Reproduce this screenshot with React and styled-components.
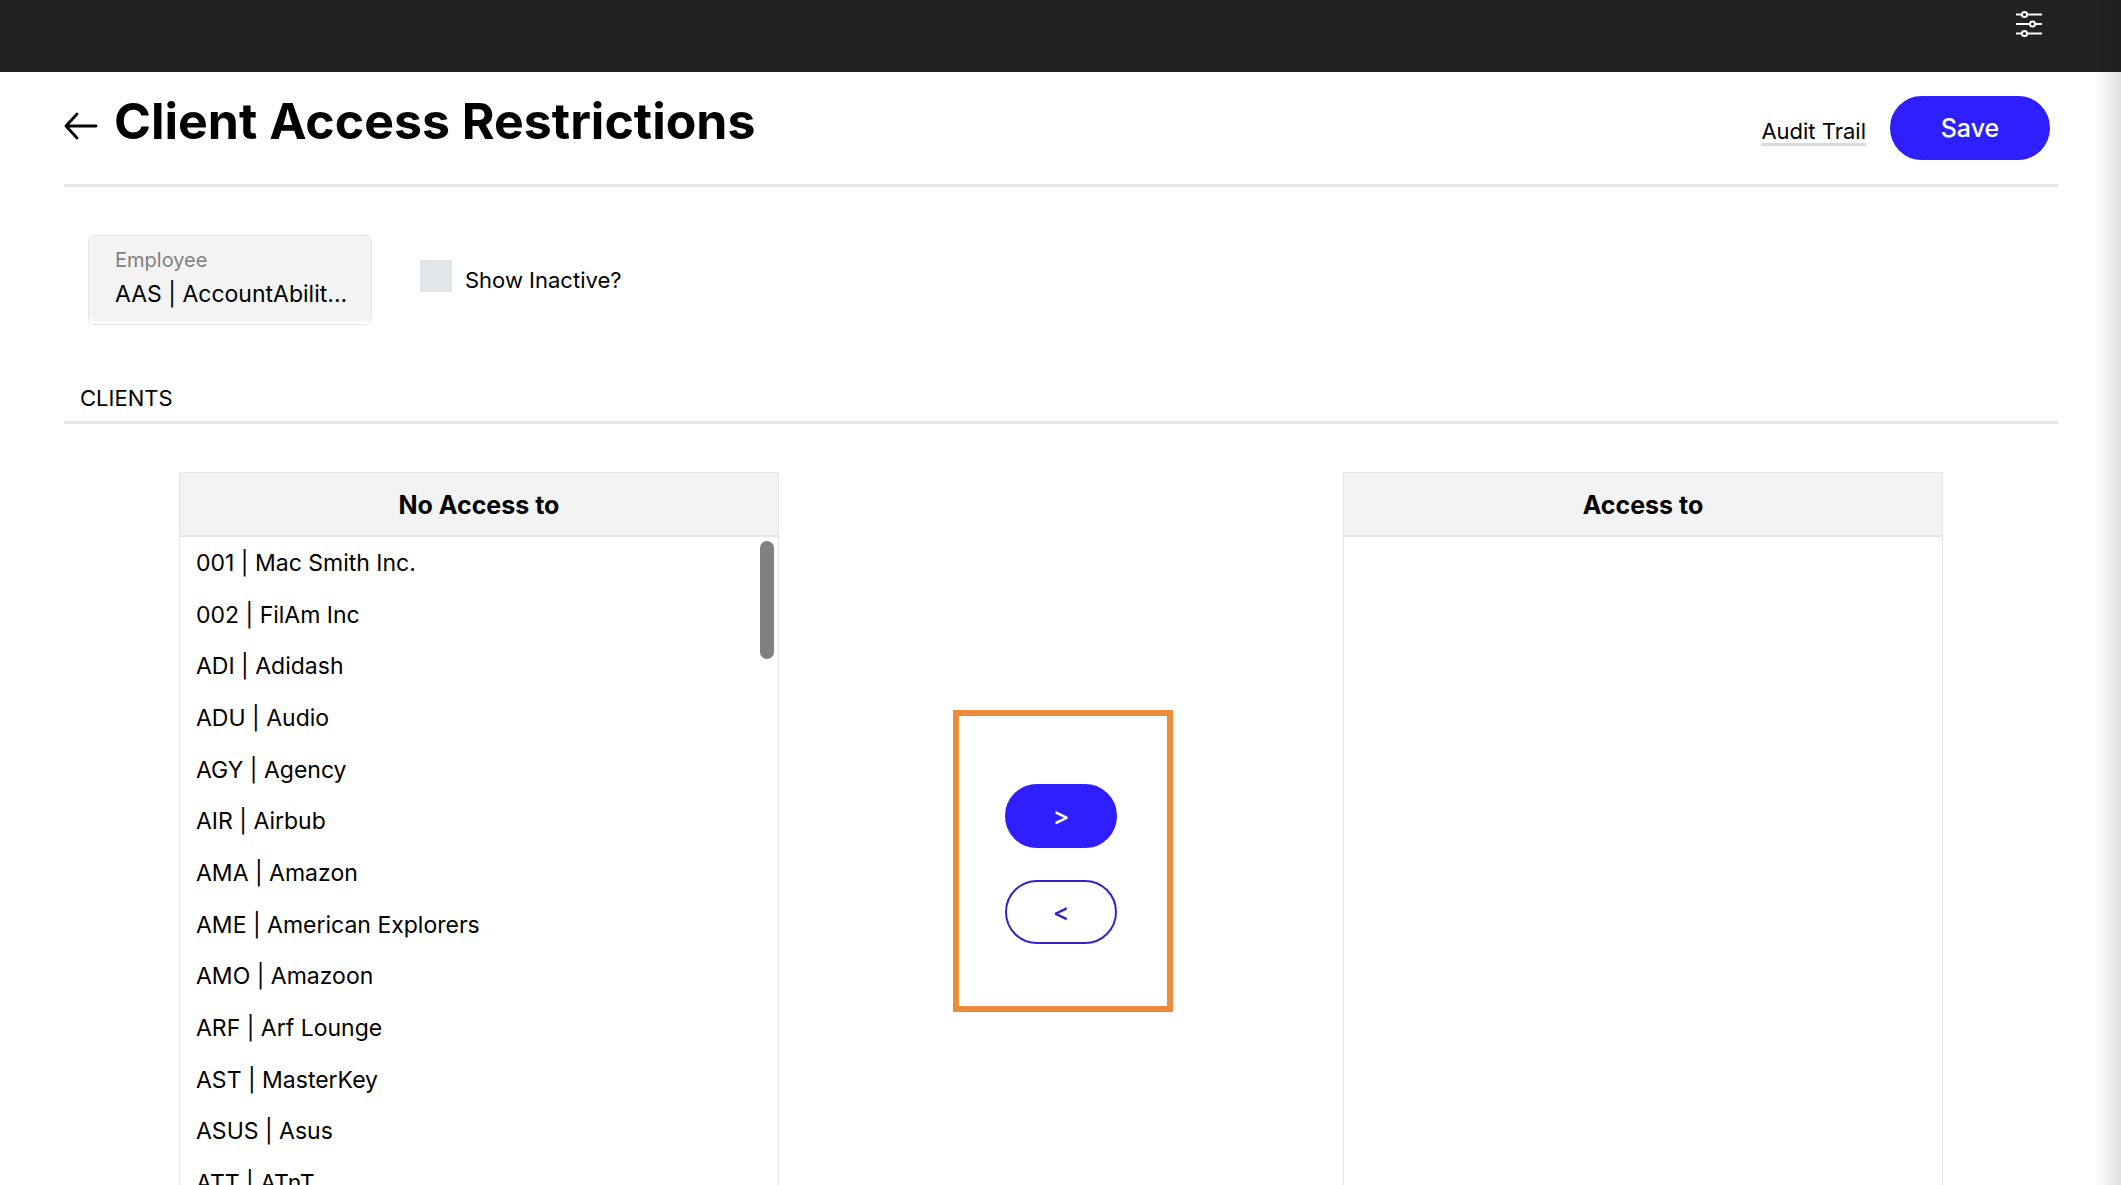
import { useState } from 'react';
import styled, { createGlobalStyle, css } from 'styled-components';

const colors = {
  black: '#000000',
  white: '#ffffff',
  bar: '#222222',
  primary: '#2d1fff',
  outline: '#3124c4',
  grey: '#f3f3f3',
  line: '#e3e5e7',
  label: '#808080',
  highlight: '#ea8c3a',
};

const GlobalStyle = createGlobalStyle`
  * {
    box-sizing: border-box;
  }
  body {
    margin: 0;
    background: ${colors.white};
    color: ${colors.black};
    font-family: Inter, 'Liberation Sans', sans-serif;
    font-size: 22px;
    line-height: 28px;
  }
  button,
  input,
  select {
    font: inherit;
    color: inherit;
  }
`;

const Page = styled.div`
  position: relative;
  height: 100vh;
  overflow: hidden;
`;
const EdgeShadow = styled.div`
  position: absolute;
  top: 0;
  right: 0;
  bottom: 0;
  width: 28px;
  pointer-events: none;
  background: linear-gradient(
    to right,
    rgba(0, 0, 0, 0),
    rgba(0, 0, 0, 0.04) 40%,
    rgba(0, 0, 0, 0.12)
  );
`;
const TopBar = styled.header`
  display: flex;
  justify-content: flex-end;
  align-items: flex-start;
  height: 72px;
  padding: 10px 78px;
  background: ${colors.bar};
`;
const IconButton = styled.button`
  display: flex;
  padding: 0;
  border: 0;
  background: none;
  cursor: pointer;
`;
const Content = styled.main`
  padding: 0 63px 0 64px;
`;
const TitleBar = styled.div`
  display: flex;
  align-items: center;
  height: 115px;
  padding-right: 8px;
  border-bottom: 3px solid ${colors.line};
`;
const BackLink = styled.a`
  display: flex;
  margin-right: 16px;
  padding-bottom: 4px;
`;
const Title = styled.h1`
  flex: 1;
  margin: 0;
  padding-bottom: 14px;
  font-size: 50px;
  font-weight: 700;
  line-height: 56px;
`;
const AuditLink = styled.a`
  margin: 8px 24px 0 0;
  border-bottom: 3px solid #d9d9d9;
  color: ${colors.black};
  line-height: 24px;
  text-decoration: none;
`;
const PillButton = styled.button`
  width: ${({ $wide }) => ($wide ? '160px' : '112px')};
  height: 64px;
  padding: 0;
  border: 2px solid ${colors.primary};
  border-radius: 32px;
  background: ${colors.primary};
  color: ${colors.white};
  font-size: 25px;
  font-weight: 500;
  cursor: pointer;
  ${({ $outlined }) =>
    $outlined &&
    css`
      border-color: ${colors.outline};
      background: ${colors.white};
      color: ${colors.outline};
    `}
`;
const Filters = styled.div`
  display: flex;
  align-items: center;
  gap: 48px;
  padding: 48px 24px 0;
`;
const SelectField = styled.label`
  width: 284px;
  height: 90px;
  padding-bottom: 3px;
  border: 1px solid ${colors.line};
  border-radius: 6px;
`;
const SelectInner = styled.span`
  display: flex;
  flex-direction: column;
  height: 100%;
  padding: 10px 16px 8px 26px;
  border-radius: 5px;
  background: ${colors.grey};
`;
const FieldLabel = styled.span`
  color: ${colors.label};
  font-size: 20px;
`;
const Select = styled.select`
  width: 100%;
  height: 40px;
  padding: 0;
  border: 0;
  background: transparent;
  font-size: 23px;
  appearance: none;
`;
const CheckField = styled.label`
  display: flex;
  align-items: center;
  gap: 13px;
`;
const Checkbox = styled.input`
  width: 32px;
  height: 32px;
  margin: 0 0 8px;
  background: #e2e6ea;
  appearance: none;
  &:checked {
    background: ${colors.primary};
  }
`;
const SectionHeading = styled.h2`
  margin: 59px 0 0;
  padding: 0 16px 9px;
  border-bottom: 3px solid ${colors.line};
  font-size: 22px;
  font-weight: 400;
  line-height: 28px;
`;
const Transfer = styled.section`
  display: flex;
  justify-content: space-between;
  align-items: flex-start;
  padding: 48px 115px 0;
`;
const Panel = styled.div`
  position: relative;
  width: 600px;
  border: 1px solid ${colors.line};
`;
const PanelHeading = styled.h3`
  margin: 0;
  padding: 18px 0 15px;
  border-bottom: 2px solid ${colors.line};
  background: ${colors.grey};
  font-size: 25px;
  font-weight: 700;
  line-height: 29px;
  text-align: center;
`;
const ClientList = styled.ul`
  display: grid;
  grid-auto-rows: 1fr;
  height: 672px;
  margin: 0;
  padding: 0;
  list-style: none;
`;
const Client = styled.li`
  display: flex;
  align-items: center;
  padding: 0 16px;
  font-size: 23px;
`;
const ScrollThumb = styled.div`
  position: absolute;
  top: 68px;
  right: 4px;
  width: 14px;
  height: 118px;
  border-radius: 7px;
  background: #808080;
`;
const MoveButtons = styled.div`
  position: relative;
  display: flex;
  flex-direction: column;
  gap: 32px;
  margin-top: 312px;
  &::before {
    content: '';
    position: absolute;
    inset: -74px -56px -68px -52px;
    border: 6px solid ${colors.highlight};
    pointer-events: none;
  }
`;

const SlidersIcon = () => (
  <svg width="27" height="28" viewBox="0 0 27 28" fill={colors.bar} stroke="#fff" strokeWidth="2">
    <path d="M0 4.5h26M0 14h26M0 23.5h26" />
    <circle cx="8.5" cy="4.5" r="2.6" />
    <circle cx="16.5" cy="14" r="2.6" />
    <circle cx="8.5" cy="23.5" r="2.6" />
  </svg>
);

const BackIcon = () => (
  <svg
    width="34"
    height="28"
    viewBox="0 0 34 28"
    fill="none"
    stroke="#000"
    strokeWidth="2.8"
    strokeLinecap="round"
    strokeLinejoin="round"
  >
    <path d="M32 14H2M13 2L2 14l11 12" />
  </svg>
);

const clients = [
  '001 | Mac Smith Inc.',
  '002 | FilAm Inc',
  'ADI | Adidash',
  'ADU | Audio',
  'AGY | Agency',
  'AIR | Airbub',
  'AMA | Amazon',
  'AME | American Explorers',
  'AMO | Amazoon',
  'ARF | Arf Lounge',
  'AST | MasterKey',
  'ASUS | Asus',
  'ATT | ATnT',
];

const AccessPanel = ({ heading, items, scrollable }) => (
  <Panel>
    <PanelHeading>{heading}</PanelHeading>
    <ClientList>
      {items.map((name) => (
        <Client key={name}>{name}</Client>
      ))}
    </ClientList>
    {scrollable && <ScrollThumb />}
  </Panel>
);

export default function App() {
  const [showInactive, setShowInactive] = useState(false);

  return (
    <Page>
      <GlobalStyle />
      <TopBar>
        <IconButton type="button" aria-label="Settings">
          <SlidersIcon />
        </IconButton>
      </TopBar>
      <Content>
        <TitleBar>
          <BackLink href="#back" aria-label="Back">
            <BackIcon />
          </BackLink>
          <Title>Client Access Restrictions</Title>
          <AuditLink href="#audit">Audit Trail</AuditLink>
          <PillButton type="button" $wide>
            Save
          </PillButton>
        </TitleBar>
        <Filters>
          <SelectField>
            <SelectInner>
              <FieldLabel>Employee</FieldLabel>
              <Select>
                <option>AAS | AccountAbilit...</option>
              </Select>
            </SelectInner>
          </SelectField>
          <CheckField>
            <Checkbox
              type="checkbox"
              checked={showInactive}
              onChange={(e) => setShowInactive(e.target.checked)}
            />
            Show Inactive?
          </CheckField>
        </Filters>
        <SectionHeading>CLIENTS</SectionHeading>
        <Transfer>
          <AccessPanel heading="No Access to" items={clients} scrollable />
          <MoveButtons>
            <PillButton type="button">&gt;</PillButton>
            <PillButton type="button" $outlined>
              &lt;
            </PillButton>
          </MoveButtons>
          <AccessPanel heading="Access to" items={[]} />
        </Transfer>
      </Content>
      <EdgeShadow />
    </Page>
  );
}
